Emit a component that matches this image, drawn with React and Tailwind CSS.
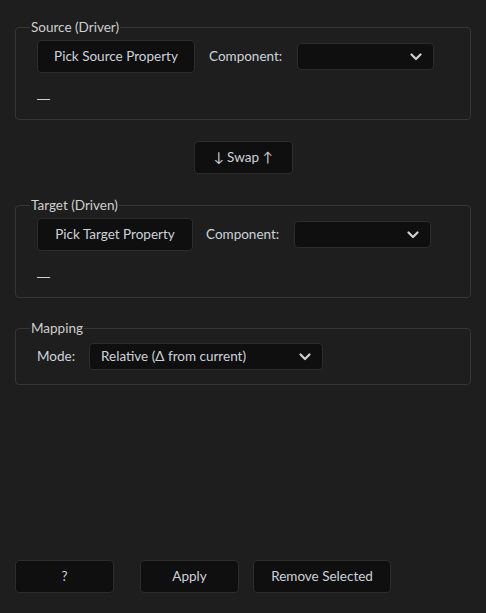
const Chevron = () => (
  <svg width="12" height="12" viewBox="0 0 12 12" className="shrink-0">
    <path d="M1.5 3.5 L6 8 L10.5 3.5" fill="none" stroke="#d0d0d0" strokeWidth="2.2" strokeLinecap="round" strokeLinejoin="round" />
  </svg>
);

const Button = ({ children, className = "" }) => (
  <button
    type="button"
    className={`flex h-[33px] items-center justify-center rounded-[4px] border border-[#2c2c2c] bg-[#0f0f0f] text-[13.5px] text-[#cdd3db] ${className}`}
  >
    {children}
  </button>
);

const Select = ({ value = "", className = "" }) => (
  <div
    className={`flex h-[27px] items-center justify-between rounded-[4px] border border-[#2c2c2c] bg-[#0f0f0f] pl-[11px] pr-[11px] text-[13.5px] text-[#cdd3db] ${className}`}
  >
    <span>{value}</span>
    <Chevron />
  </div>
);

const Group = ({ title, children, className = "" }) => (
  <fieldset className={`rounded-[4px] border border-[#363636] px-[14px] ${className}`}>
    <legend className="px-[1px] text-[13.5px] leading-[16px] text-[#cfcfcf]">{title}</legend>
    {children}
  </fieldset>
);

const PropertyGroup = ({ title, pick, pickWidth, labelGap, className = "" }) => (
  <Group title={title} className={`pb-[12px] ${className}`}>
    <div className="mt-[5px] flex items-center pl-[7px]">
      <Button className={pickWidth}>{pick}</Button>
      <span className={`${labelGap} text-[13.5px] text-[#cdd3db]`}>Component:</span>
      <Select className="ml-[15px] w-[137px]" />
    </div>
    <div
      className="mt-[18px] pl-[7px] text-[13px] leading-[16px] text-[#cfcfcf]"
      style={{ fontFamily: "'Liberation Sans', sans-serif" }}
    >
      —
    </div>
  </Group>
);

export default function App() {
  return (
    <div
      className="flex h-[613px] w-[486px] flex-col bg-[#1e1e1e] px-[15px] pt-[19px] pb-[20px]"
      style={{ fontFamily: "Lato, 'Liberation Sans', sans-serif" }}
    >
      <PropertyGroup
        title="Source (Driver)"
        pick="Pick Source Property"
        pickWidth="w-[158px]"
        labelGap="ml-[14px]"
      />

      <div className="mt-[21px] flex justify-center">
        <Button className="w-[99px]">↓ Swap ↑</Button>
      </div>

      <PropertyGroup
        title="Target (Driven)"
        pick="Pick Target Property"
        pickWidth="w-[156px]"
        labelGap="ml-[13px]"
        className="mt-[23px]"
      />

      <Group title="Mapping" className="mt-[22px] pb-[14px]">
        <div className="mt-[7px] flex items-center pl-[7px]">
          <span className="text-[13.5px] text-[#cdd3db]">Mode:</span>
          <Select className="ml-[14px] w-[234px]" value="Relative (Δ from current)" />
        </div>
      </Group>

      <div className="mt-auto flex items-center">
        <Button className="w-[99px]">?</Button>
        <Button className="ml-[26px] w-[99px]">Apply</Button>
        <Button className="ml-[14px] w-[138px]">Remove Selected</Button>
      </div>
    </div>
  );
}
